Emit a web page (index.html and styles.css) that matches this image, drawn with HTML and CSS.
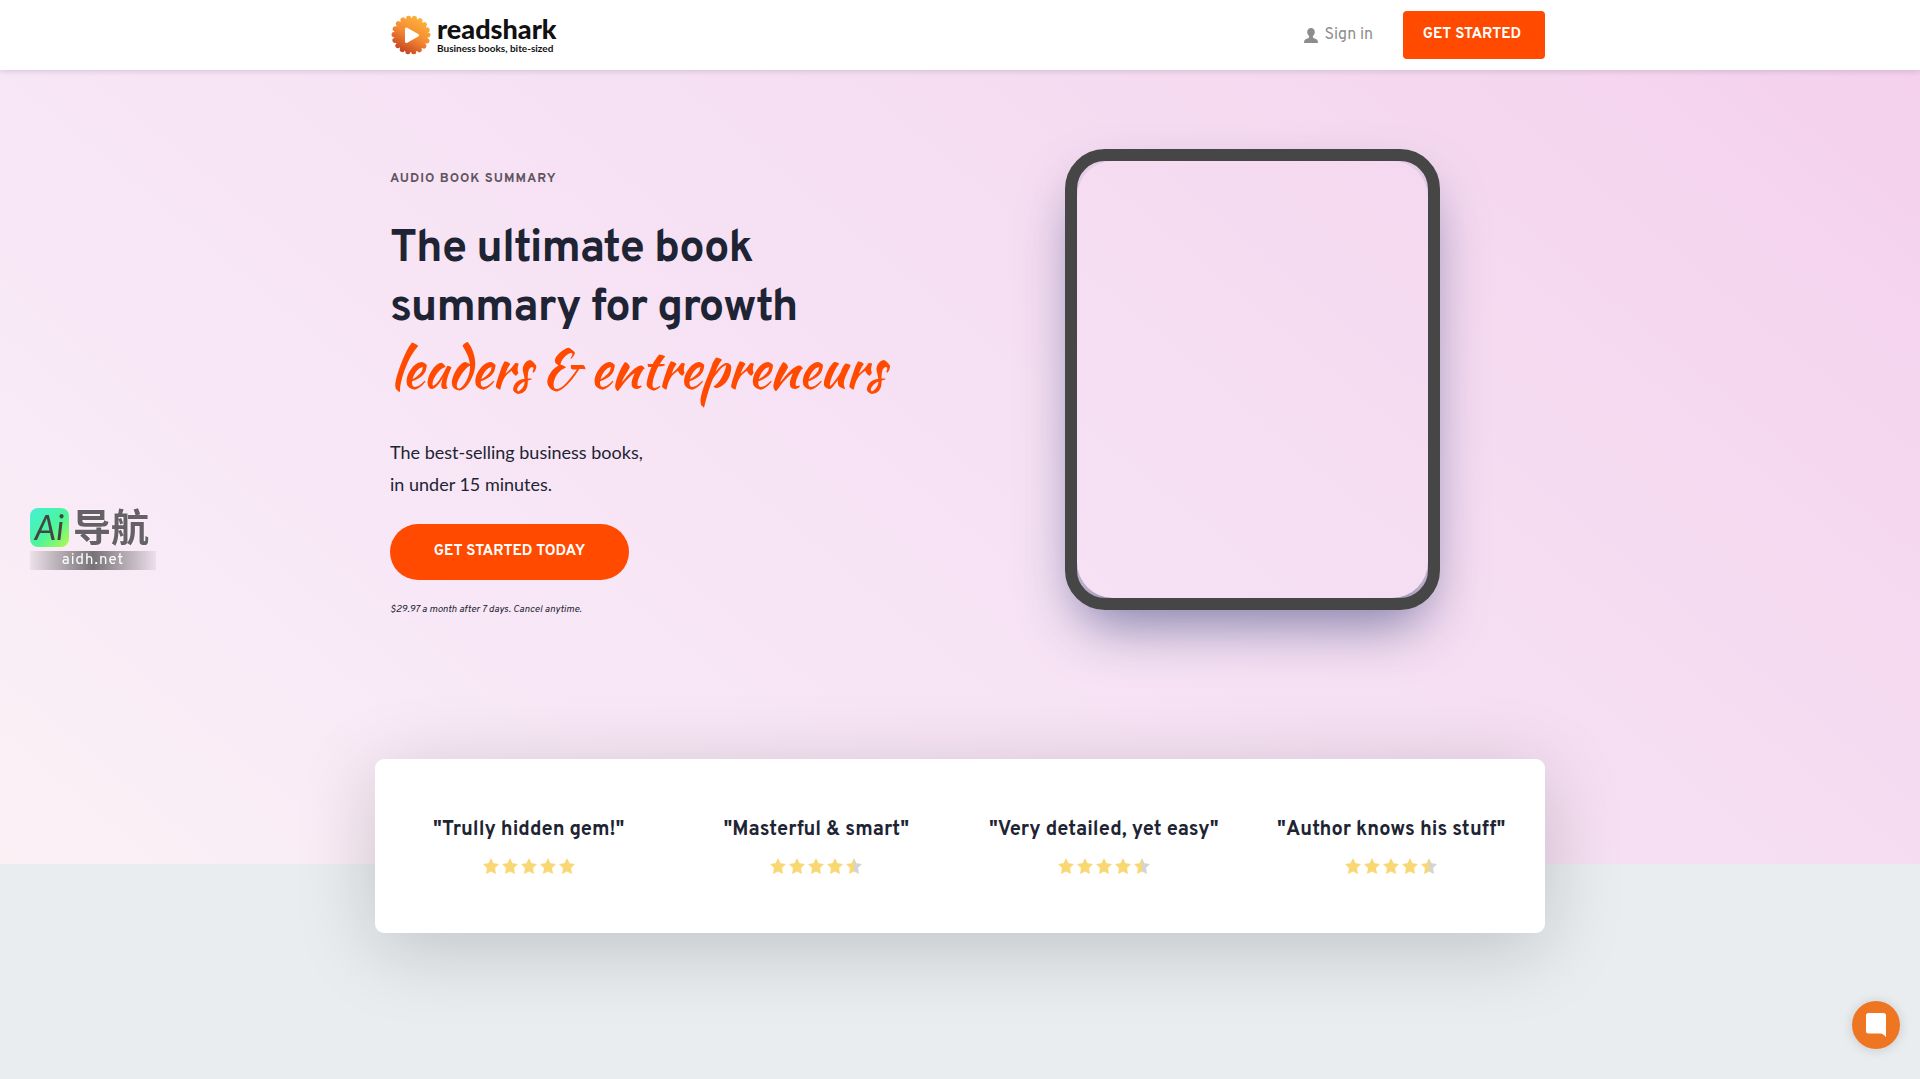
FILE: index.html
```html
<!DOCTYPE html>
<html lang="en">
<head>
  <meta charset="UTF-8">
  <meta name="viewport" content="width=device-width, initial-scale=1.0">
  <title>Readshark - Business books, bite-sized</title>
  <link rel="stylesheet" href="styles.css">
</head>
<body>
  <!-- Star shapes used by the ratings -->
  <svg class="sprite" aria-hidden="true">
    <defs>
      <linearGradient id="half">
        <stop offset="50%" stop-color="#f8d774"/>
        <stop offset="50%" stop-color="#d4d4d4"/>
      </linearGradient>
      <symbol id="star" viewBox="0 0 16 16">
        <path d="M8 0l2.500 5.300 5.500.7-4 4 1 6-5-2.600L3 16l1-6-4-4 5.500-.7z"/>
      </symbol>
    </defs>
  </svg>

  <header class="header">
    <div class="container header-inner">
      <a href="#" class="logo">
        <svg class="logo-mark" viewBox="0 0 40 40" aria-hidden="true">
          <defs>
            <linearGradient id="sun" gradientUnits="userSpaceOnUse" x1="30" y1="2" x2="10" y2="38">
              <stop offset="0" stop-color="#fdb53c"/>
              <stop offset="0.5" stop-color="#f58a32"/>
              <stop offset="1" stop-color="#c23f22"/>
            </linearGradient>
          </defs>
          <circle cx="20" cy="20" r="17" fill="url(#sun)"/>
          <circle cx="20" cy="20" r="17" fill="none" stroke="url(#sun)" stroke-width="5" stroke-linecap="round" stroke-dasharray="0.100 5.834"/>
          <path d="M15.500 14v12.500l11-6.200z" fill="#fff" stroke="#fff" stroke-width="3" stroke-linejoin="round"/>
        </svg>
        <span class="logo-text">
          <span class="logo-name">readshark</span>
          <span class="logo-tag">Business books, bite-sized</span>
        </span>
      </a>
      <nav class="nav">
        <a href="#" class="signin">
          <svg width="14" height="15" viewBox="0 0 14 15" fill="#8d8d8d" aria-hidden="true">
            <path d="M7 0c2.400 0 3.800 1.700 3.800 4 0 1.700-.8 3.200-1.900 4v1.200c.3.900 1.500 1.200 2.900 1.700 1.500.5 2.200 1.600 2.200 4.100H0c0-2.500.7-3.600 2.200-4.100 1.400-.5 2.600-.8 2.900-1.700V8C4 7.200 3.200 5.700 3.200 4 3.200 1.700 4.600 0 7 0z"/>
          </svg>
          Sign in
        </a>
        <button type="button" class="btn btn-small">GET STARTED</button>
      </nav>
    </div>
  </header>

  <section class="hero">
    <div class="container hero-inner">
      <div class="hero-text">
        <p class="eyebrow">AUDIO BOOK SUMMARY</p>
        <h1>The ultimate book<br>summary for growth<br><em>leaders &amp; entrepreneurs</em></h1>
        <p class="lead">The best-selling business books,<br>in under 15 minutes.</p>
        <button type="button" class="btn btn-pill">GET STARTED TODAY</button>
        <p class="note">$29.97 a month after 7 days. Cancel anytime.</p>
      </div>
      <div class="hero-media">
        <div class="tablet"><div class="tablet-screen"></div></div>
      </div>
    </div>
  </section>

  <section class="reviews">
    <div class="card">
      <div class="review">
        <h3>"Trully hidden gem!"</h3>
        <div class="stars">
          <svg><use href="#star"/></svg><svg><use href="#star"/></svg><svg><use href="#star"/></svg><svg><use href="#star"/></svg><svg><use href="#star"/></svg>
        </div>
      </div>
      <div class="review">
        <h3>"Masterful &amp; smart"</h3>
        <div class="stars">
          <svg><use href="#star"/></svg><svg><use href="#star"/></svg><svg><use href="#star"/></svg><svg><use href="#star"/></svg><svg class="half"><use href="#star"/></svg>
        </div>
      </div>
      <div class="review">
        <h3>"Very detailed, yet easy"</h3>
        <div class="stars">
          <svg><use href="#star"/></svg><svg><use href="#star"/></svg><svg><use href="#star"/></svg><svg><use href="#star"/></svg><svg class="half"><use href="#star"/></svg>
        </div>
      </div>
      <div class="review">
        <h3>"Author knows his stuff"</h3>
        <div class="stars">
          <svg><use href="#star"/></svg><svg><use href="#star"/></svg><svg><use href="#star"/></svg><svg><use href="#star"/></svg><svg class="half"><use href="#star"/></svg>
        </div>
      </div>
    </div>
  </section>

  <!-- Floating badge, left side -->
  <a href="#" class="badge">
    <span class="badge-top">
      <span class="badge-ai">Ai</span>
      <span class="badge-cn" lang="zh">导航</span>
    </span>
    <span class="badge-url">aidh.net</span>
  </a>

  <!-- Chat launcher -->
  <button type="button" class="chat" aria-label="Open chat">
    <svg width="20" height="24" viewBox="0 0 20 24" fill="#fff" aria-hidden="true">
      <path d="M2.500 0h15A2.500 2.500 0 0 1 20 2.500V24c-1.800-1.500-3-3.500-6-3.500H2.500A2.500 2.500 0 0 1 0 18V2.500A2.500 2.500 0 0 1 2.500 0z"/>
    </svg>
  </button>
</body>
</html>
```
FILE: styles.css
```css
* {
  margin: 0;
  padding: 0;
  box-sizing: border-box;
}

body {
  background-color: #e9edf0;
  color: #1e2433;
  font-family: Overpass, Roboto, "Liberation Sans", sans-serif;
  min-height: 100vh;
}

a {
  text-decoration: none;
}

.sprite {
  position: absolute;
  width: 0;
  height: 0;
}

.container {
  width: 100%;
  max-width: 1170px;
  margin: 0 auto;
}

/* Header */
.header {
  position: relative;
  z-index: 2;
  background-color: #fff;
  box-shadow: 0 1px 6px rgba(0, 0, 0, 0.15);
}

.header-inner {
  display: flex;
  justify-content: space-between;
  align-items: center;
  height: 70px;
  padding-left: 16px;
}

.logo {
  display: flex;
  align-items: center;
  gap: 6px;
}

.logo-mark {
  width: 40px;
  height: 40px;
}

.logo-text {
  display: flex;
  flex-direction: column;
  color: #111;
  font-family: Lato, sans-serif;
}

.logo-name {
  font-size: 27px;
  font-weight: 900;
  line-height: 26px;
}

.logo-tag {
  font-size: 10px;
  font-weight: bold;
  line-height: 12px;
}

.nav {
  display: flex;
  align-items: center;
  gap: 30px;
}

.signin {
  display: flex;
  align-items: center;
  gap: 6px;
  color: #8d8d8d;
  font-size: 16px;
}

.btn {
  border: none;
  background-color: #ff4a00;
  color: #fff;
  font-family: inherit;
  font-weight: bold;
  cursor: pointer;
}

.btn-small {
  width: 142px;
  height: 48px;
  padding: 0 4px 2px 0;
  border-radius: 4px;
  font-size: 15px;
}

/* Hero */
.hero {
  isolation: isolate;
  min-height: 794px;
  background: linear-gradient(220deg, #f4d0ed 0%, #f5d9f0 22%, #f6e2f4 52%, #f8e8f7 74%, #fbf1f5 100%);
}

.hero-inner {
  display: flex;
  justify-content: space-between;
  padding: 79px 105px 0 15px;
}

.eyebrow {
  margin-top: 20px;
  color: #5f5561;
  font-size: 13px;
  font-weight: bold;
  line-height: 20px;
  letter-spacing: 1px;
}

h1 {
  margin-top: 31px;
  font-size: 45px;
  font-weight: bold;
  line-height: 59px;
  letter-spacing: -1px;
}

h1 em {
  display: block;
  color: #ff4a00;
  font-family: "Kaushan Script", Lato, cursive;
  font-size: 55px;
  font-style: normal;
  font-weight: normal;
  line-height: 60px;
}

.lead {
  margin-top: 38px;
  font-family: Lato, sans-serif;
  font-size: 18px;
  line-height: 32px;
}

.btn-pill {
  width: 239px;
  height: 56px;
  margin-top: 24px;
  padding-bottom: 2px;
  border-radius: 28px;
  font-size: 15px;
}

.note {
  margin-top: 20px;
  font-size: 10px;
  font-style: italic;
  line-height: 20px;
}

.tablet {
  width: 375px;
  height: 461px;
  border: 12px solid #464646;
  border-radius: 40px;
}

/* sits under the frame, so its shadow shows in the corners */
.tablet-screen {
  position: relative;
  z-index: -1;
  height: 100%;
  border-radius: 36px;
  box-shadow: 0 26px 54px rgba(50, 60, 115, 0.6);
}

/* Reviews */
.reviews {
  padding-bottom: 140px;
}

.card {
  display: grid;
  grid-template-columns: repeat(4, 1fr);
  width: 100%;
  max-width: 1170px;
  margin: -105px auto 0;
  padding: 55px 10px 59px;
  position: relative;
  border-radius: 9px;
  background-color: #fff;
  box-shadow: 0 15px 80px rgba(0, 0, 0, 0.18);
}

.review {
  text-align: center;
}

.review h3 {
  font-size: 20px;
  line-height: 32px;
}

.stars {
  display: flex;
  justify-content: center;
  gap: 3px;
  padding-top: 12px;
}

.stars svg {
  width: 16px;
  height: 16px;
  fill: #f8d774;
}

.stars .half {
  fill: url(#half);
}

/* Badge */
.badge {
  position: fixed;
  left: 30px;
  top: 508px;
  width: 126px;
}

.badge-top {
  display: flex;
  align-items: center;
  gap: 4px;
}

.badge-ai {
  width: 39px;
  height: 39px;
  border-radius: 8px;
  background: linear-gradient(135deg, #45f0d8, #4df59a 55%, #b6f94a);
  color: #444;
  font-family: Lato, sans-serif;
  font-size: 34px;
  font-style: italic;
  line-height: 38px;
  text-align: center;
}

.badge-cn {
  height: 39px;
  color: #666067;
  font-family: "Noto Sans CJK SC", sans-serif;
  font-size: 38px;
  font-weight: bold;
  line-height: 34px;
  text-shadow: 0 0 2px #fff;
}

.badge-url {
  display: block;
  margin-top: 4px;
  background: linear-gradient(90deg, rgba(130, 125, 130, 0.1), #777277 50%, rgba(130, 125, 130, 0.1));
  color: #fff;
  font-size: 15px;
  line-height: 19px;
  letter-spacing: 1px;
  text-align: center;
}

/* Chat */
.chat {
  position: fixed;
  right: 20px;
  bottom: 30px;
  display: flex;
  justify-content: center;
  align-items: center;
  width: 48px;
  height: 48px;
  border: none;
  border-radius: 50%;
  background-color: #ee7623;
  box-shadow: 0 1px 12px rgba(0, 0, 0, 0.15);
  cursor: pointer;
}
```
